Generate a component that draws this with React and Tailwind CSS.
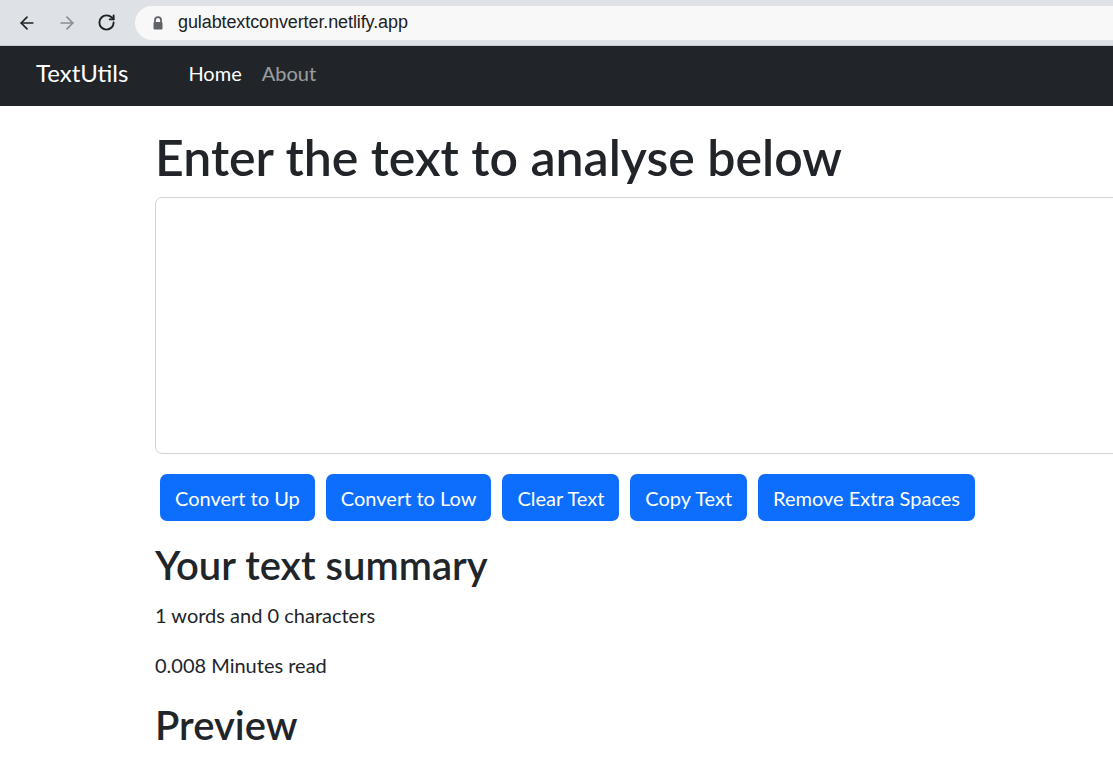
import { ArrowLeft, ArrowRight, RotateCw } from "lucide-react";

const font = { fontFamily: "Lato, 'Noto Sans', sans-serif" };

function LockIcon() {
  return (
    <svg width="12" height="14" viewBox="0 0 12 14" aria-hidden="true">
      <path d="M3 6V4.2a3 3 0 0 1 6 0V6" fill="none" stroke="#5f6368" strokeWidth="1.8" />
      <rect x="1.5" y="6" width="9" height="7.5" rx="1" fill="#5f6368" />
    </svg>
  );
}

function BrowserBar() {
  return (
    <div className="flex h-[46px] items-center border-b border-[#c8c9cc] bg-[#dee1e6] font-['Liberation_Sans',sans-serif]">
      <div className="flex w-[135px] items-center">
        <ArrowLeft size={20} strokeWidth={2} className="ml-[17px] text-[#202124]" />
        <ArrowRight size={20} strokeWidth={2} className="ml-[20px] text-[#8a8c90]" />
        <RotateCw size={19} strokeWidth={2.4} className="ml-[20px] text-[#202124]" />
      </div>
      <div className="flex h-[34px] flex-1 items-center rounded-l-full bg-[#f8f8f8] pl-[17px]">
        <LockIcon />
        <span className="ml-[14px] text-[18px] tracking-[-0.1px] text-[#202124]">
          gulabtextconverter.netlify.app
        </span>
      </div>
    </div>
  );
}

function Navbar() {
  return (
    <nav className="flex h-[60px] items-center bg-[#212529] px-[36px] pb-[7px]">
      <span className="text-[24px] text-white">TextUtils</span>
      <ul className="ml-[60px] flex items-center gap-[20px] text-[20px]">
        <li className="text-white">Home</li>
        <li className="text-white/55">About</li>
      </ul>
    </nav>
  );
}

const buttons = [
  "Convert to Up",
  "Convert to Low",
  "Clear Text",
  "Copy Text",
  "Remove Extra Spaces",
];

export default function App() {
  return (
    <div className="min-h-screen overflow-hidden bg-white text-[#212529]" style={font}>
      <BrowserBar />
      <Navbar />
      <div className="pl-[155px]">
        <div className="mt-[21px]">
          <h1 className="mb-[10px] text-[50px] font-semibold leading-[60px]">
            Enter the text to analyse below
          </h1>
          <textarea
            rows={8}
            className="block h-[257px] w-[1000px] resize-none rounded-l-[7px] border border-[#ced4da] bg-white"
          />
        </div>
        <div className="mt-[20px] flex gap-[11px] pl-[5px]">
          {buttons.map((label) => (
            <button
              key={label}
              type="button"
              className="h-[47px] rounded-[7px] bg-[#0d6efd] px-[15px] text-[20px] text-white"
            >
              {label}
            </button>
          ))}
        </div>
        <div className="mt-[20px]">
          <h2 className="mb-[11px] text-[40px] font-semibold leading-[48px]">Your text summary</h2>
          <p className="mb-[20px] text-[20px] leading-[30px]">1 words and 0 characters</p>
          <p className="mb-[21px] text-[20px] leading-[30px]">0.008 Minutes read</p>
          <h2 className="text-[40px] font-semibold leading-[48px]">Preview</h2>
        </div>
      </div>
    </div>
  );
}
